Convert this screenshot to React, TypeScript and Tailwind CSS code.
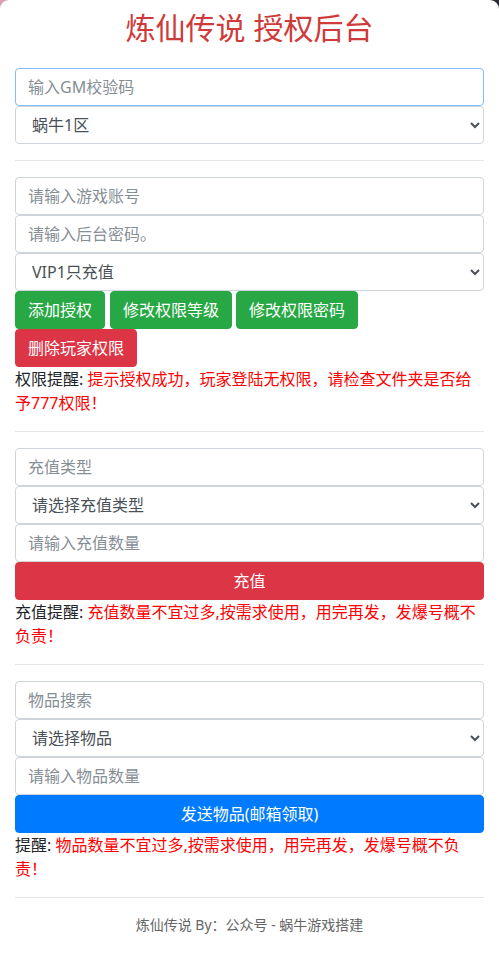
import React from 'react';

const font = { fontFamily: '"Noto Sans", "Noto Sans CJK SC", sans-serif' };

const inputCls =
  'block w-full h-[38px] px-3 py-[6px] text-[16px] leading-6 text-[#495057] bg-white border border-[#ced4da] rounded-[4px] placeholder:text-[#868e96] outline-none';

const selectCls =
  'block w-full h-[38px] pl-3 pr-2 text-[16px] text-[#495057] bg-white border border-[#ced4da] rounded-[4px] outline-none';

const greenBtn =
  'h-[38px] px-3 text-[16px] text-white bg-[#28a745] border border-[#28a745] rounded-[4px]';

const Divider = () => <hr className="my-4 border-0 border-t border-black/10" />;

const Note: React.FC<{ label: string; text: string }> = ({ label, text }) => (
  <p className="text-[16px] leading-6 text-[#212529]">
    {label + ': '}
    <span className="text-[#ff0000]">{text}</span>
  </p>
);

const App: React.FC = () => {
  return (
    <div className="min-h-[960px] bg-gradient-to-r from-[#d9a2b6] to-[#2b2b36]" style={font}>
      <div className="min-h-[960px] bg-white rounded-[9px] px-[15px] pb-10">
        {/* 标题 */}
        <h1 className="pt-[10px] mb-[22px] text-center text-[30px] leading-9 text-[#cf3a3a]">
          炼仙传说 授权后台
        </h1>

        {/* 校验码 / 区服 */}
        <input
          type="text"
          placeholder="输入GM校验码"
          className={inputCls + ' !border-[#80bdff]'}
        />
        <select className={selectCls} defaultValue="1">
          <option value="1">蜗牛1区</option>
        </select>

        <Divider />

        {/* 授权 */}
        <input type="text" placeholder="请输入游戏账号" className={inputCls} />
        <input type="password" placeholder="请输入后台密码。" className={inputCls} />
        <select className={selectCls} defaultValue="vip1">
          <option value="vip1">VIP1只充值</option>
        </select>
        <div className="flex">
          <button className={greenBtn}>添加授权</button>
          <button className={greenBtn + ' ml-[5px]'}>修改权限等级</button>
          <button className={greenBtn + ' ml-[4px]'}>修改权限密码</button>
        </div>
        <div className="flex">
          <button className="h-[38px] px-3 text-[16px] text-white bg-[#dc3545] border border-[#dc3545] rounded-[4px]">
            删除玩家权限
          </button>
        </div>
        <Note label="权限提醒" text="提示授权成功，玩家登陆无权限，请检查文件夹是否给予777权限！" />

        <Divider />

        {/* 充值 */}
        <input type="text" placeholder="充值类型" className={inputCls} />
        <select className={selectCls} defaultValue="">
          <option value="">请选择充值类型</option>
        </select>
        <input type="text" placeholder="请输入充值数量" className={inputCls} />
        <button className="block w-full h-[38px] px-3 text-[16px] text-white bg-[#dc3545] border border-[#dc3545] rounded-[4px]">
          充值
        </button>
        <Note label="充值提醒" text="充值数量不宜过多,按需求使用，用完再发，发爆号概不负责！" />

        <Divider />

        {/* 物品 */}
        <input type="text" placeholder="物品搜索" className={inputCls} />
        <select className={selectCls} defaultValue="">
          <option value="">请选择物品</option>
        </select>
        <input type="text" placeholder="请输入物品数量" className={inputCls} />
        <button className="block w-full h-[38px] px-3 text-[16px] text-white bg-[#007bff] border border-[#007bff] rounded-[4px]">
          发送物品(邮箱领取)
        </button>
        <Note label="提醒" text="物品数量不宜过多,按需求使用，用完再发，发爆号概不负责！" />

        <Divider />

        <p className="text-center text-[14px] leading-[21px] text-[#666]">
          炼仙传说 By：公众号 - 蜗牛游戏搭建
        </p>
      </div>
    </div>
  );
};

export default App;
